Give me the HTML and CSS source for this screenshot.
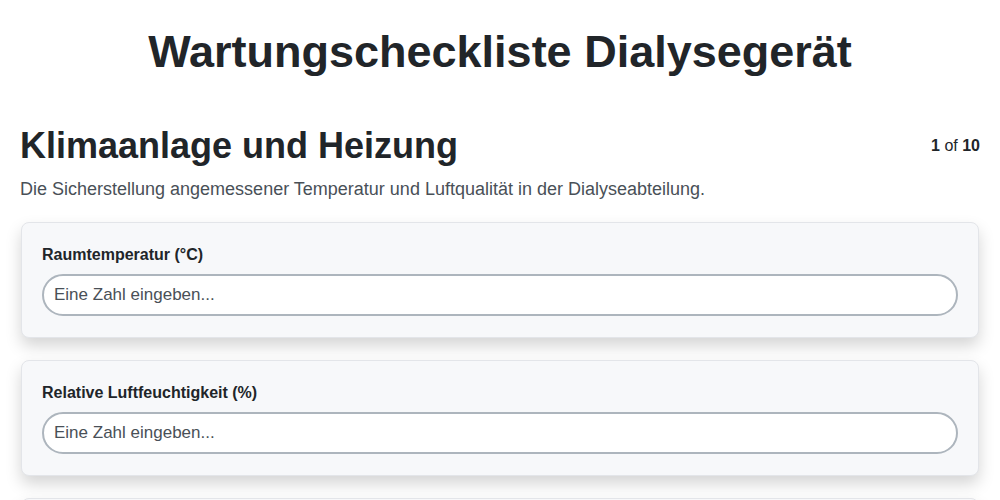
FILE: index.html
```html
<!DOCTYPE html>
<html lang="de">

<head>
    <meta charset="UTF-8">
    <meta name="viewport" content="width=device-width, initial-scale=1.0">
    <title>Wartungscheckliste Dialysegerät</title>
    <link rel="stylesheet" href="styles.css">
</head>

<body>
    <div class="page">
        <h1 class="title">Wartungscheckliste Dialysegerät</h1>

        <div class="sectionHead">
            <h2 class="sectionTitle">Klimaanlage und Heizung</h2>
            <div class="counter"><b>1</b> of <b>10</b></div>
        </div>
        <p class="sectionDesc">Die Sicherstellung angemessener Temperatur und Luftqualität in der Dialyseabteilung.</p>

        <div class="cards">
            <div class="card">
                <label class="cardLabel" for="temp">Raumtemperatur (°C)</label>
                <input class="cardInput" id="temp" type="number" placeholder="Eine Zahl eingeben...">
            </div>
            <div class="card">
                <label class="cardLabel" for="humid">Relative Luftfeuchtigkeit (%)</label>
                <input class="cardInput" id="humid" type="number" placeholder="Eine Zahl eingeben...">
            </div>
            <div class="card">
                <label class="cardLabel" for="filter">Luftfilter gewechselt</label>
                <input class="cardInput" id="filter" type="text" placeholder="Eine Zahl eingeben...">
            </div>
        </div>
    </div>
</body>

</html>
```

FILE: styles.css
```css
* {
    padding: 0;
    margin: 0;
    box-sizing: border-box;
}

body {
    font-family: "Liberation Sans", Arial, sans-serif;
    color: #212529;
    background-color: #fff;
}

.page {
    padding: 0 20px;
}

.title {
    font-size: 45px;
    font-weight: bold;
    text-align: center;
    line-height: 1.2;
    padding-top: 25px;
    margin-bottom: 45px;
}

.sectionHead {
    display: flex;
    justify-content: space-between;
    align-items: flex-start;
}

.sectionTitle {
    font-size: 36px;
    font-weight: bold;
    line-height: 1.2;
}

.counter {
    font-size: 16px;
    padding-top: 13px;
}

.sectionDesc {
    font-size: 18px;
    color: #495057;
    margin-top: 12px;
    margin-bottom: 22px;
}

.cards {
    display: flex;
    flex-direction: column;
    gap: 22px;
    padding: 0 1px;
}

.card {
    background-color: #f7f8fa;
    border: 1px solid #e3e5e9;
    border-radius: 8px;
    box-shadow: 0 8px 16px rgba(0, 0, 0, 0.17);
    padding: 23px 20px 21px 20px;
}

.cardLabel {
    display: block;
    font-size: 16px;
    font-weight: bold;
    margin-bottom: 10px;
}

.cardInput {
    display: block;
    width: 100%;
    height: 42px;
    border: 2px solid #adb5bd;
    border-radius: 21px;
    background-color: #fff;
    padding: 0 10px;
    font-family: "Liberation Sans", Arial, sans-serif;
    font-size: 17px;
    color: #212529;
    outline: none;
}

.cardInput::placeholder {
    color: #495057;
}

.cardInput::-webkit-inner-spin-button,
.cardInput::-webkit-outer-spin-button {
    -webkit-appearance: none;
}
```
